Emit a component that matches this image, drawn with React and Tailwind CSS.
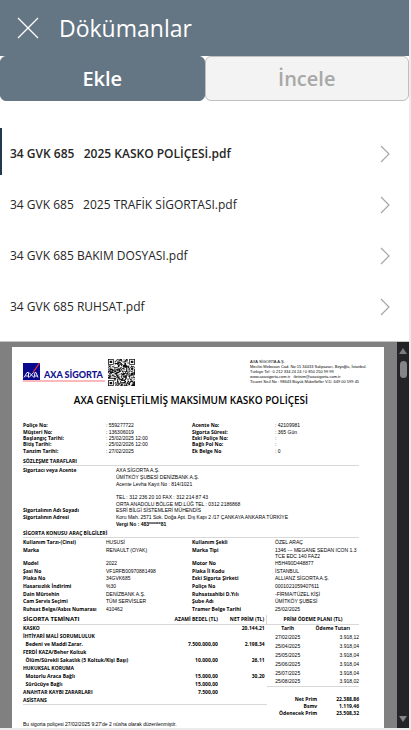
import React, { useState } from "react";

const files = [
  "34 GVK 685   2025 KASKO POLİÇESİ.pdf",
  "34 GVK 685   2025 TRAFİK SİGORTASI.pdf",
  "34 GVK 685 BAKIM DOSYASI.pdf",
  "34 GVK 685 RUHSAT.pdf",
];

const policy = [
  ["Poliçe No:", ": 559277722", "Acente No:", ": 42109981"],
  ["Müşteri No:", ": 136306019", "Sigorta Süresi:", ": 365 Gün"],
  ["Başlangıç Tarihi:", ": 25/02/2025 12:00", "Eski Poliçe No:", ":"],
  ["Bitiş Tarihi:", ": 25/02/2026 12:00", "Bağlı Pol No:", ":"],
  ["Tanzim Tarihi:", ": 27/02/2025", "Ek Belge No", ": 0"],
];

const parties = [
  ["Sigortacı veya Acente", "AXA SİGORTA A.Ş."],
  ["", "ÜMİTKÖY ŞUBESİ DENİZBANK A.Ş."],
  ["", "Acente Levha Kayıt No : 814/1021"],
  ["", ""],
  ["", "TEL : 312 236 20 10 FAX : 312 214 87 43"],
  ["", "ORTA ANADOLU BÖLGE MD.LÜĞ TEL : 0312 2186868"],
  ["Sigortalının Adı Soyadı", "ESRİ BİLGİ SİSTEMLERİ MÜHENDİS"],
  ["Sigortalının Adresi", "Koru Mah. 2571 Sok. Doğa Apt. Dış Kapı 2 /17 ÇANKAYA ANKARA TÜRKİYE"],
  ["", "Vergi No : 483******81"],
];

const vehicle = [
  ["Model", "2022", "Motor No", "H5H490D448877"],
  ["Şasi No", "VF1RFB00970881498", "Plaka İl Kodu", "İSTANBUL"],
  ["Plaka No", "34GVK685", "Eski Sigorta Şirketi", "ALLIANZ SİGORTA A.Ş."],
  ["Hasarsızlık İndirimi", "%30", "Poliçe No", "0001021059407611"],
  ["Dain Mürtehin", "DENİZBANK A.Ş.", "Ruhsatsahibi D.Yılı", "-FİRMA/TÜZEL KİŞİ"],
  ["Cam Servis Seçimi", "TÜM SERVİSLER", "Şube Adı", "ÜMİTKÖY ŞUBESİ"],
  ["Ruhsat Belge/Asbıs Numarası", "410462", "Tramer Belge Tarihi", "25/02/2025"],
];

const cover = [
  ["KASKO", "", "20.144,21"],
  ["İHTİYARİ MALİ SORUMLULUK", "", ""],
  ["  Bedeni ve Maddi Zarar.", "7.500.000,00", "2.198,34"],
  ["FERDİ KAZA/Beher Koltuk", "", ""],
  ["  Ölüm/Sürekli Sakatlık (5 Koltuk/Kişi Başı)", "10.000,00", "26,11"],
  ["HUKUKSAL KORUMA", "", ""],
  ["  Motorlu Araca Bağlı", "15.000,00", "30,20"],
  ["  Sürücüye Bağlı", "15.000,00", ""],
  ["ANAHTAR KAYBI ZARARLARI", "7.500,00", ""],
  ["ASİSTANS", "", ""],
];

const payments = [
  ["27/02/2025", "3.918,12"],
  ["25/04/2025", "3.918,04"],
  ["25/05/2025", "3.918,04"],
  ["25/06/2025", "3.918,04"],
  ["25/07/2025", "3.918,04"],
  ["25/08/2025", "3.918,02"],
];

const totals = [
  ["Net Prim", "22.388,86"],
  ["Bsmv", "1.119,46"],
  ["Ödenecek Prim", "23.508,32"],
];

const N = 33;
function inFinder(x, y) {
  const corners = [[0, 0], [N - 7, 0], [0, N - 7]];
  for (const [cx, cy] of corners) {
    const dx = x - cx;
    const dy = y - cy;
    if (dx >= -1 && dx <= 7 && dy >= -1 && dy <= 7) {
      if (dx < 0 || dx > 6 || dy < 0 || dy > 6) return 0;
      if (dx === 0 || dx === 6 || dy === 0 || dy === 6) return 1;
      return dx > 1 && dx < 5 && dy > 1 && dy < 5 ? 1 : 0;
    }
  }
  return null;
}
function qrPath() {
  let seed = 4217;
  let d = "";
  for (let y = 0; y < N; y++) {
    for (let x = 0; x < N; x++) {
      seed = (seed * 1103515245 + 12345) % 2147483648;
      const f = inFinder(x, y);
      const on = f === null ? seed / 2147483648 > 0.42 : f === 1;
      if (on) d += `M${x} ${y}h1v1h-1z`;
    }
  }
  return d;
}

function QrCode() {
  return (
    <svg viewBox="0 0 33 33" className="h-[27px] w-[27px] shrink-0" aria-hidden="true">
      <path d={qrPath()} fill="#111" />
    </svg>
  );
}

function Brand() {
  return (
    <div className="mt-1 flex h-[19px] w-[82px] shrink-0 items-start gap-1 border-b-2 border-[#fbb8bd]">
      <svg viewBox="0 0 17 17" className="h-[17px] w-[17px] shrink-0" aria-hidden="true">
        <rect width="17" height="17" fill="#0a0a8c" />
        <path d="M16.500 0L10 9.500" stroke="#f0304a" strokeWidth="1.200" />
        <path d="M1 14.500L4 9.500H5.500V14.500M2.500 13H5.500M6 9.500L11 14.500M10.500 9.500L6 14.500M11 14.500L12 9.500H13L15 14.500M11.500 13H14.500" stroke="#e8e8f6" fill="none" strokeWidth="1" />
      </svg>
      <span className="pt-[6px] font-['Lato',sans-serif] text-[9px] leading-[12px] font-black text-[#12128f]">AXA SİGORTA</span>
    </div>
  );
}

function Section({ children }) {
  return <h3 className="border-b border-[#d8d8d8] leading-[8px] font-bold">{children}</h3>;
}

function Facts({ rows, className }) {
  return (
    <dl className={"grid auto-rows-fr " + className}>
      {rows.map((r, i) => (
        <div key={i} className="grid grid-cols-[83fr_86fr_83fr_84fr] items-center">
          <dt className="font-bold">{r[0]}</dt>
          <dd className="font-['Liberation_Sans',sans-serif]">{r[1]}</dd>
          <dt className="font-bold">{r[2]}</dt>
          <dd className="font-['Liberation_Sans',sans-serif]">{r[3]}</dd>
        </div>
      ))}
    </dl>
  );
}

function PolicyPage() {
  return (
    <article className="min-w-0 flex-1 bg-white pt-3 pr-[25px] pl-[11px] font-['Open_Sans','Noto_Sans',sans-serif] text-[5px] leading-[6px] whitespace-pre text-black">
      <div className="flex items-start">
        <Brand />
        <div className="ml-[3px]"><QrCode /></div>
        <address className="ml-auto w-[109px] font-['Liberation_Sans',sans-serif] text-[4px] leading-[5px] not-italic">
          <p>AXA SİGORTA A.Ş.</p>
          <p>Meclisi Mebusan Cad. No:15 34433 Salıpazarı, Beyoğlu, İstanbul.</p>
          <p>Türkiye Tel : 0 212 334 24 24 / 0 850 250 99 99</p>
          <p>www.axasigorta.com.tr   iletisim@axasigorta.com.tr</p>
          <p>Ticaret Sicil No : 98643 Büyük Mükellefler V.D. 649 00 599 45</p>
        </address>
      </div>
      <h2 className="mt-[7px] text-center text-[10px] leading-[14px] font-semibold">AXA GENİŞLETİLMİŞ MAKSİMUM KASKO POLİÇESİ</h2>

      <Facts rows={policy} className="mt-[15px] h-8" />

      <div className="mt-[3px]"><Section>SÖZLEŞME TARAFLARI</Section></div>
      <dl className="mt-px grid h-[60px] auto-rows-fr">
        {parties.map((r, i) => (
          <div key={i} className="grid grid-cols-[93fr_243fr] items-center">
            <dt className="font-bold">{r[0]}</dt>
            <dd className={"font-['Liberation_Sans',sans-serif] " + (i === 8 ? "font-bold" : "")}>{r[1]}</dd>
          </div>
        ))}
      </dl>

      <div className="mt-[2px]"><Section>SİGORTA KONUSU ARAÇ BİLGİLERİ</Section></div>
      <Facts rows={[["Kullanım Tarzı-(Cinsi)", "HUSUSİ", "Kullanım Şekli", "ÖZEL ARAÇ"]]} className="h-2" />
      <Facts rows={[["Marka\n ", "RENAULT (OYAK)\n ", "Marka Tipi\n ", "1346 --- MEGANE SEDAN ICON 1.3\nTCE EDC 140 FAZ2"]]} className="h-[13px]" />
      <Facts rows={vehicle} className="h-[54px]" />

      <div className="mt-[2px] flex items-start">
        <table className="min-w-0 flex-[244] table-fixed font-bold">
          <thead>
            <tr className="h-[9px] border-b border-[#d8d8d8]">
              <th className="w-[50%] text-left text-[6px]">SİGORTA TEMİNATI</th>
              <th className="w-[30%] text-right">AZAMİ BEDEL (TL)</th>
              <th className="w-[20%] border-r border-[#d8d8d8] pr-[2px] text-right">NET PRİM (TL)</th>
            </tr>
          </thead>
          <tbody className="border-b border-[#d8d8d8]">
            {cover.map((r, i) => (
              <tr key={i} className="h-[8px]">
                <td>{r[0]}</td>
                <td className="text-right">{r[1]}</td>
                <td className="pr-[2px] text-right">{r[2]}</td>
              </tr>
            ))}
          </tbody>
        </table>
        <div className="min-w-0 flex-[92]">
          <table className="w-full">
            <thead>
              <tr className="h-[9px] border-b border-[#d8d8d8]"><th colSpan={2}>PRİM ÖDEME PLANI (TL)</th></tr>
              <tr className="h-2">
                <th className="pr-2 pl-[14px] text-left">Tarih</th>
                <th className="pr-[9px] text-right">Ödeme Tutarı</th>
              </tr>
            </thead>
            <tbody className="border-b border-[#d8d8d8] font-['Liberation_Sans',sans-serif]">
              {payments.map((r) => (
                <tr key={r[0]} className="h-[9px]">
                  <td className="pl-[8px]">{r[0]}</td>
                  <td className="text-right">{r[1]}</td>
                </tr>
              ))}
            </tbody>
          </table>
          <table className="mt-[9px] w-full font-bold">
            <tbody>
              {totals.map((r) => (
                <tr key={r[0]} className="h-[7px]">
                  <th className="w-[50px] text-right">{r[0]}</th>
                  <td className="text-right">{r[1]}</td>
                </tr>
              ))}
            </tbody>
          </table>
        </div>
      </div>
      <p className="mt-1 font-['Liberation_Sans',sans-serif]">Bu sigorta poliçesi 27/02/2025 9:27'de 2 nüsha olarak düzenlenmiştir.</p>
    </article>
  );
}

export default function App() {
  const [active, setActive] = useState(0);
  return (
    <div className="flex h-screen flex-col overflow-hidden border-r-2 border-b-2 border-[#ebebeb] bg-white font-['Open_Sans','Noto_Sans',sans-serif]">
      <header className="flex h-14 shrink-0 items-center gap-5 bg-[#647583] pl-[17px] text-white">
        <button type="button" aria-label="Kapat">
          <svg viewBox="0 0 22 22" className="block h-[22px] w-[22px]" fill="none" stroke="currentColor" strokeWidth="1.300">
            <path d="M1 1L21 21M21 1L1 21" />
          </svg>
        </button>
        <h1 className="text-[23px]">Dökümanlar</h1>
      </header>

      <div className="grid shrink-0 grid-cols-2 text-xl font-semibold">
        <button type="button" className="h-[45px] rounded-md border border-[#647583] bg-[#647583] text-white">Ekle</button>
        <button type="button" className="h-[45px] rounded-md border border-[#bfbfbf] bg-[#f3f3f3] text-[#a8a8a8]">İncele</button>
      </div>

      <ul className="flex shrink-0 flex-col gap-1 pt-[27px] pb-[13px]">
        {files.map((f, i) => (
          <li key={f}>
            <button
              type="button"
              onClick={() => setActive(i)}
              className={"flex h-[47px] w-full items-center justify-between border-l-2 pt-[5px] pr-[18px] pl-2 text-left text-[12px] whitespace-pre text-[#262626] " + (i === active ? "border-[#22384d] font-semibold" : "border-transparent")}
            >
              {f}
              <svg viewBox="0 0 12 18" className="h-[18px] w-3" fill="none" stroke="#a3a3a3" strokeWidth="1.100">
                <path d="M2 1L10 9L2 17" />
              </svg>
            </button>
          </li>
        ))}
      </ul>

      <section className="flex min-h-0 flex-1 border-t border-[#c6c6c6] bg-[#808080]">
        <div className="flex min-w-0 flex-1 overflow-hidden pt-[5px] pr-[13px] pl-3">
          <PolicyPage />
        </div>
        <div className="flex w-3 shrink-0 flex-col items-center bg-[#242328] py-[6px]">
          <svg viewBox="0 0 8 6" className="h-[6px] w-2" fill="#7d7d80"><path d="M4 0L8 6H0z" /></svg>
          <div className="mt-[7px] h-[17px] w-[7px] rounded-full bg-[#858587]" />
          <svg viewBox="0 0 8 6" className="mt-auto h-[6px] w-2" fill="#858587"><path d="M0 0H8L4 6z" /></svg>
        </div>
      </section>
    </div>
  );
}
